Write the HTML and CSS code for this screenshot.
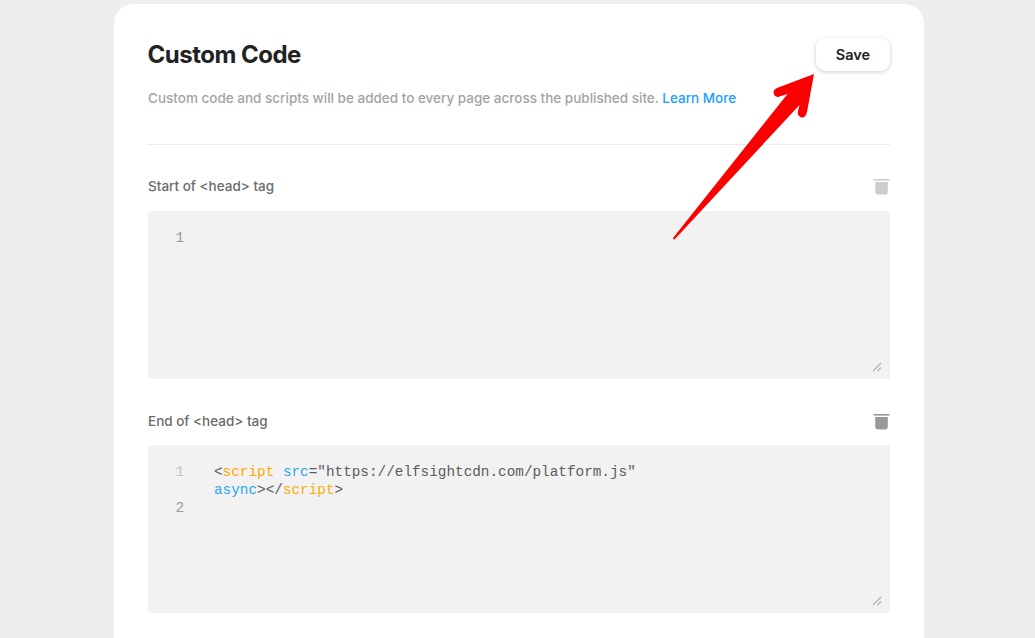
FILE: index.html
```html
<!DOCTYPE html>
<html lang="en">
<head>
<meta charset="utf-8">
<title>Custom Code</title>
<link rel="stylesheet" href="styles.css">
</head>
<body>
<main class="card">
  <header class="head">
    <div class="head-row">
      <h1 class="title">Custom Code</h1>
      <button class="save" type="button">Save</button>
    </div>
    <p class="desc">Custom code and scripts will be added to every page across the published site. <a class="link" href="#">Learn More</a></p>
  </header>

  <section class="block">
    <div class="block-head">
      <span class="label">Start of &lt;head&gt; tag</span>
      <svg class="trash trash-off" viewBox="0 0 17 16" aria-hidden="true"><path d="M0.5 0h16v1.6h-16z"/><path d="M2.2 3h12.6v9.6a3 3 0 0 1-3 3H5.2a3 3 0 0 1-3-3z"/></svg>
    </div>
    <div class="editor">
      <div class="line"><span class="num">1</span><span class="code"></span></div>
      <svg class="grip" viewBox="0 0 10 10" aria-hidden="true"><path d="M1 9 9 1M5.5 9 9 5.5"/></svg>
    </div>
  </section>

  <section class="block">
    <div class="block-head">
      <span class="label">End of &lt;head&gt; tag</span>
      <svg class="trash" viewBox="0 0 17 16" aria-hidden="true"><path d="M0.5 0h16v1.6h-16z"/><path d="M2.2 3h12.6v9.6a3 3 0 0 1-3 3H5.2a3 3 0 0 1-3-3z"/></svg>
    </div>
    <div class="editor">
      <div class="line"><span class="num dim">1</span><span class="code">&lt;<span class="tag">script</span> <span class="attr">src</span>="https://elfsightcdn.com/platform.js"<br><span class="attr">async</span>&gt;&lt;/<span class="tag">script</span>&gt;</span></div>
      <div class="line"><span class="num">2</span><span class="code"></span></div>
      <svg class="grip" viewBox="0 0 10 10" aria-hidden="true"><path d="M1 9 9 1M5.5 9 9 5.5"/></svg>
    </div>
  </section>
</main>

<svg class="arrow" viewBox="0 0 1035 638" aria-hidden="true">
  <path d="M814 74 L807 112 Q805.500 118 801.500 117.500 Q797 116.500 798 111 L799.500 105 L674 240 L673 238 L787.500 94 L778 97 Q773.500 96.500 773.500 92 Q774 89 777 88 Z"/>
</svg>
</body>
</html>
```
FILE: styles.css
```css
html, body {
  margin: 0;
  height: 638px;
  overflow: hidden;
  background: #eeeeee;
  font-family: Inter, "Liberation Sans", sans-serif;
}

.card {
  box-sizing: border-box;
  width: 810px;
  height: 634px;
  margin: 4px 0 0 114px;
  padding: 34px 34px 0;
  background: #ffffff;
  border-radius: 20px 20px 0 0;
}

.head {
  height: 106px;
  border-bottom: 1px solid #ececec;
}

.head-row {
  display: flex;
  justify-content: space-between;
  align-items: center;
  height: 33px;
}

.title {
  margin: 0 0 0 -0.5px;
  font-size: 24px;
  line-height: 33px;
  font-weight: 700;
  letter-spacing: -0.5px;
  color: #222222;
}

.save {
  width: 74px;
  height: 33px;
  padding: 0;
  border: 0;
  border-radius: 9px;
  background: #ffffff;
  box-shadow: 0 1px 4px rgba(0, 0, 0, 0.2);
  font: 600 14.5px/33px Inter, "Liberation Sans", sans-serif;
  color: #222222;
}

.desc {
  margin: 18px 0 0;
  font-size: 13.5px;
  line-height: 18px;
  font-weight: 500;
  color: #a3a3a3;
}

.link {
  color: #1a9fff;
  text-decoration: none;
}

.block {
  padding-top: 32px;
}

.block + .block {
  padding-top: 33px;
}

.block-head {
  display: flex;
  justify-content: space-between;
  align-items: center;
  height: 19px;
  margin-bottom: 15px;
}

.block + .block .block-head {
  margin-bottom: 14px;
}

.label {
  font-size: 13.5px;
  line-height: 19px;
  font-weight: 500;
  color: #6b6b6b;
}

.trash {
  width: 17px;
  height: 16px;
  fill: #999999;
}

.trash-off {
  fill: #cccccc;
}

.editor {
  position: relative;
  box-sizing: border-box;
  height: 168px;
  padding-top: 18px;
  background: #f2f2f2;
  border-radius: 2px;
  font-family: "Liberation Mono", monospace;
  font-size: 14.35px;
  line-height: 18px;
  color: #5c5c5c;
}

.line {
  display: flex;
}

.num {
  flex: none;
  width: 36px;
  text-align: right;
  color: #999999;
}

.num.dim {
  color: #c4c4c4;
}

.code {
  margin-left: 30px;
  white-space: nowrap;
}

.tag {
  color: #ffab00;
}

.attr {
  color: #2ea6f5;
}

.grip {
  position: absolute;
  right: 8px;
  bottom: 7px;
  width: 10px;
  height: 10px;
  fill: none;
  stroke: #b4b4b4;
  stroke-width: 1.3;
}

.arrow {
  position: absolute;
  left: 0;
  top: 0;
  width: 1035px;
  height: 638px;
  fill: #fa0000;
  pointer-events: none;
}
```
